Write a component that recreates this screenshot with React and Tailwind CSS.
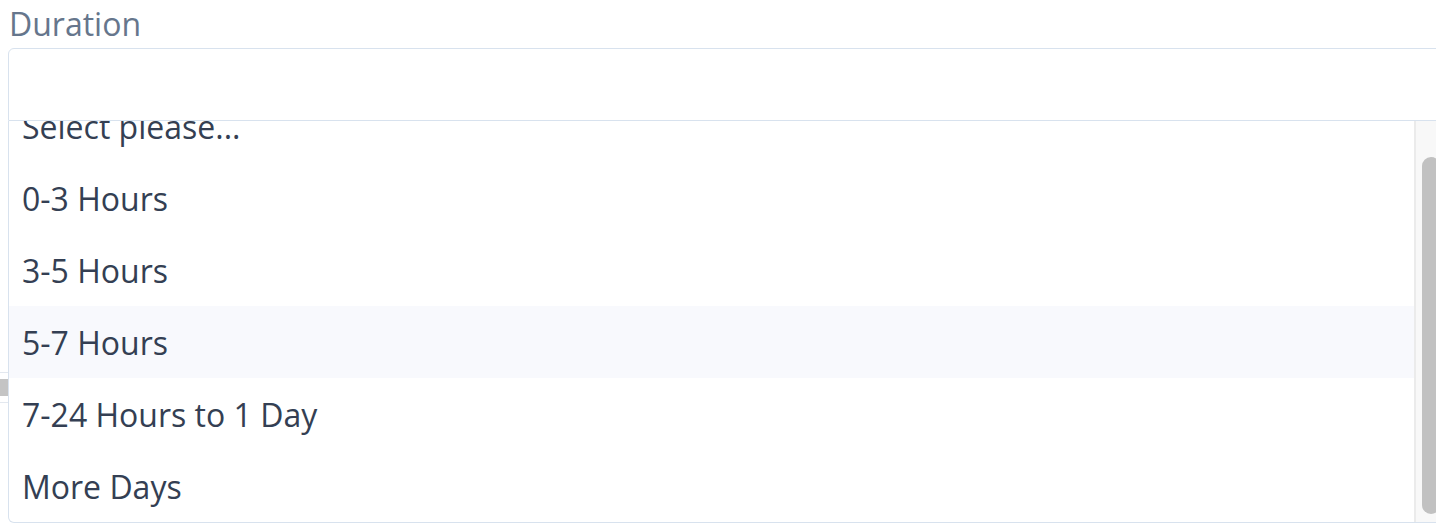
import React from "react";

const OPTIONS = ["Select please...", "0-3 Hours", "3-5 Hours", "5-7 Hours", "7-24 Hours to 1 Day", "More Days"];

export default function App() {
  const active = "5-7 Hours";

  return (
    <div className="relative h-[530px] w-[1436px] overflow-hidden bg-white" style={{ fontFamily: '"Open Sans", "Noto Sans", sans-serif' }}>
      {/* something peeking out from under the menu */}
      <div className="absolute left-0 top-[372px] h-[31px] w-[8px] border-y border-[#e3e8ef] bg-white py-[6px]">
        <div className="h-full w-full bg-[#c4c4c4]" />
      </div>

      <div className="relative">
        <label className="block h-[48px] pl-[9px] text-[32px] leading-[47px] text-[#66768c]">Duration</label>

        <div className="ml-[8px] w-[1460px]">
          {/* select input */}
          <div className="h-[73px] rounded-tl-[6px] border border-[#d8e2ee] bg-white" />

          {/* open menu, scrolled to the bottom */}
          <div className="flex h-[402px] overflow-hidden rounded-bl-[6px] border-x border-b border-[#d8e2ee] bg-white">
            <div className="h-[401px] w-[1405px] overflow-hidden">
              <ul className="-mt-[31px]">
                {OPTIONS.map((o) => (
                  <li
                    key={o}
                    className={`h-[72px] whitespace-nowrap pl-[13px] pt-[2px] text-[32px] leading-[70px] text-[#343f53] ${o === active ? "bg-[#f8f9fd]" : ""}`}
                  >
                    {o}
                  </li>
                ))}
              </ul>
            </div>
            {/* scrollbar */}
            <div className="h-[401px] w-[40px] border-l-2 border-[#ebebeb] bg-[#f8f8f8] pl-[6px] pt-[36px]">
              <div className="h-[357px] w-[18px] rounded-[10px] bg-[#c1c1c1]" />
            </div>
          </div>
        </div>
      </div>
    </div>
  );
}
